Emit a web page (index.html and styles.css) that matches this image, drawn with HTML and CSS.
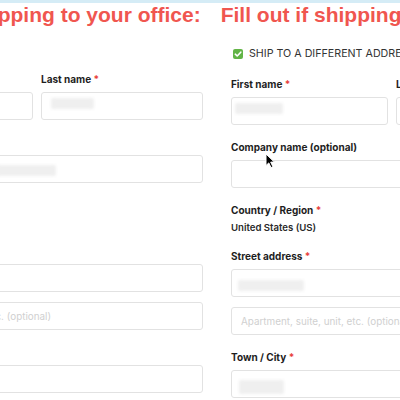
FILE: index.html
```html
<!DOCTYPE html>
<html lang="en">
<head>
<meta charset="utf-8">
<title>Checkout shipping</title>
<link rel="stylesheet" href="styles.css">
</head>
<body>
<div class="page">
  <div class="topline"></div>
  <div class="headline">
    <span class="head-left">Shipping to your office:</span>
    <span class="head-right">Fill out if shipping to a different address</span>
  </div>
  <div class="form">
    <div class="col col-left">
      <div class="row">
        <div class="field">
          <div class="label">First name <span class="req">*</span></div>
          <div class="input"></div>
        </div>
        <div class="field">
          <div class="label">Last name <span class="req">*</span></div>
          <div class="input"><span class="blur blur-ln"></span></div>
        </div>
      </div>
      <div class="field">
        <div class="label">Company name (optional)</div>
        <div class="input"><span class="blur blur-co"></span></div>
      </div>
      <div class="field country">
        <div class="label">Country / Region <span class="req">*</span></div>
        <div class="value">United States (US)</div>
      </div>
      <div class="field">
        <div class="label">Street address <span class="req">*</span></div>
        <div class="input"></div>
        <div class="input second"><span class="placeholder">Apartment, suite, unit, etc. (optional)</span></div>
      </div>
      <div class="field">
        <div class="label">Town / City <span class="req">*</span></div>
        <div class="input"></div>
      </div>
    </div>
    <div class="col col-right">
      <label class="ship">
        <span class="check"><svg viewBox="0 0 10 10" width="10" height="10"><path d="M2.3 5.2 L4.2 7 L7.8 3.2" fill="none" stroke="#fff" stroke-width="1.6" stroke-linecap="round" stroke-linejoin="round"/></svg></span>
        <span class="ship-text">SHIP TO A DIFFERENT ADDRESS?</span>
      </label>
      <div class="row">
        <div class="field">
          <div class="label">First name <span class="req">*</span></div>
          <div class="input"><span class="blur blur-fn"></span></div>
        </div>
        <div class="field">
          <div class="label">Last name <span class="req">*</span></div>
          <div class="input"></div>
        </div>
      </div>
      <div class="field">
        <div class="label">Company name (optional)</div>
        <div class="input"></div>
      </div>
      <div class="field country">
        <div class="label">Country / Region <span class="req">*</span></div>
        <div class="value">United States (US)</div>
      </div>
      <div class="field">
        <div class="label">Street address <span class="req">*</span></div>
        <div class="input"><span class="blur blur-st"></span></div>
        <div class="input second"><span class="placeholder">Apartment, suite, unit, etc. (optional)</span></div>
      </div>
      <div class="field">
        <div class="label">Town / City <span class="req">*</span></div>
        <div class="input"><span class="blur blur-tc"></span></div>
      </div>
    </div>
  </div>
  <svg class="cursor" viewBox="0 0 11 16" width="11" height="16"><path d="M1 1 L1 12.5 L3.8 9.9 L6 14.6 L7.9 13.7 L5.7 9.1 L9.4 9.1 Z" fill="#000" stroke="#fff" stroke-width="1" stroke-linejoin="round"/></svg>
</div>
</body>
</html>
```
FILE: styles.css
```css
html, body {
  margin: 0;
  padding: 0;
  background: #fff;
}
.page {
  position: relative;
  width: 400px;
  height: 400px;
  overflow: hidden;
  font-family: Inter, "Noto Sans", sans-serif;
  color: #1e1e1e;
}
.topline {
  height: 3px;
  background: #d5ecf6;
}
.headline {
  display: flex;
  margin-left: -35px;
  height: 24px;
  white-space: nowrap;
  font-family: "Liberation Sans", Arial, sans-serif;
  font-weight: 700;
  font-size: 21px;
  line-height: 24px;
  color: #f0564f;
}
.head-right {
  margin-left: 20px;
}
.form {
  display: flex;
  gap: 28px;
  margin-left: -129px;
}
.col {
  flex: none;
  display: flex;
  flex-direction: column;
  gap: 15px;
}
.col-left {
  width: 332px;
  padding-top: 45px;
}
.col-right {
  width: 322px;
  padding-top: 20px;
}
.ship {
  display: flex;
  align-items: center;
  gap: 6px;
  height: 14px;
  margin-bottom: 1px;
  padding-left: 2px;
  font-size: 10.7px;
  line-height: 14px;
  color: #333;
  white-space: nowrap;
}
.check {
  width: 10px;
  height: 10px;
  border-radius: 2px;
  background: #62b446;
  display: flex;
}
.row {
  display: grid;
  grid-template-columns: 1fr 1fr;
  gap: 8px;
}
.field {
  display: flex;
  flex-direction: column;
  min-width: 0;
}
.label {
  font-size: 10px;
  line-height: 14px;
  font-weight: 700;
  margin-bottom: 6px;
  white-space: nowrap;
}
.req {
  color: #e8403a;
}
.country .label {
  margin-bottom: 4px;
}
.value {
  font-size: 9.6px;
  line-height: 14px;
  font-weight: 600;
  color: #2a2a2a;
}
.country {
  margin-bottom: -1px;
}
.input {
  box-sizing: border-box;
  height: 28px;
  border: 1px solid #e2e2e2;
  border-radius: 3px;
  background: #fff;
  display: flex;
  align-items: center;
  padding-left: 9px;
  white-space: nowrap;
  overflow: hidden;
}
.input.second {
  margin-top: 10px;
}
.placeholder {
  font-size: 9.9px;
  color: #d0d0d0;
}
.blur {
  display: block;
  height: 11px;
  background: #efefef;
  filter: blur(1.5px);
  border-radius: 2px;
}
.blur-fn { width: 48px; margin-left: -6px; margin-top: -6px; }
.blur-ln { width: 43px; margin-left: 0; margin-top: -6px; }
.blur-co { width: 60px; margin-left: 115px; margin-top: 2px; }
.blur-st { width: 66px; margin-left: -3px; margin-top: 4px; }
.blur-tc { width: 45px; margin-left: -2px; margin-top: 6px; height: 14px; }
.cursor {
  position: absolute;
  left: 265px;
  top: 153px;
}
```
